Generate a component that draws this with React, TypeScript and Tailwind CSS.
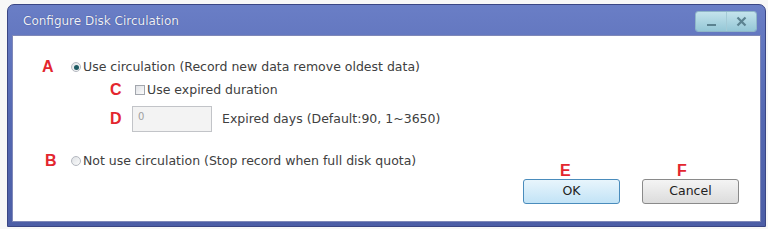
import React from 'react';

const Letter: React.FC<{ children: string; className?: string }> = ({ children, className }) => (
  <span className={`font-['Liberation_Sans',sans-serif] text-[16px] font-bold leading-none text-[#e3262e] ${className ?? ''}`}>
    {children}
  </span>
);

const Radio: React.FC<{ checked?: boolean }> = ({ checked }) => (
  <span className="flex h-[10px] w-[10px] items-center justify-center rounded-full border border-[#b4b8c0] bg-gradient-to-br from-[#dfe2e6] to-[#fafafa]">
    {checked && <span className="h-[5px] w-[5px] rounded-full bg-[#1d5a63]" />}
  </span>
);

export default function App() {
  return (
    <div className="h-[229px] w-[768px] overflow-hidden bg-[#f7f7f7] pl-[7px] pr-[2px] pt-[4px] font-['DejaVu_Sans',sans-serif]">
      <div className="flex h-[223px] flex-col rounded-t-[7px] border border-[#3a4684] bg-gradient-to-b from-[#6a7ec6] via-[#5468b2] to-[#4c5ea6]">
        {/* Title bar */}
        <div className="flex h-[30px] shrink-0 items-center justify-between pl-[15px] pr-[8px] pt-[2px]">
          <span className="text-[12px] text-[#eef0fa] [text-shadow:0_0_1px_#2c3a78]">Configure Disk Circulation</span>
          <div className="flex h-[21px] overflow-hidden rounded-[3px] border border-[#8fb6c8]">
            <div className="flex w-[30px] items-end justify-center bg-gradient-to-b from-[#c4e3ec] to-[#94c7d6] pb-[5px]">
              <span className="h-[2px] w-[9px] bg-[#5b8290]" />
            </div>
            <div className="flex w-[30px] items-center justify-center border-l border-[#a4cad6] bg-gradient-to-b from-[#c4e3ec] to-[#94c7d6]">
              <svg width="11" height="11" viewBox="0 0 11 11">
                <path d="M1.5 1.5 L9.5 9.5 M9.5 1.5 L1.5 9.5" stroke="#5b8290" strokeWidth="2.2" />
              </svg>
            </div>
          </div>
        </div>

        {/* Client area */}
        <div className="mx-[4px] mb-[4px] flex flex-1 flex-col border border-[#7f88b8] bg-white pr-[21px] pt-[21px] text-[12.5px] text-[#404040]">
          <div className="flex h-[20px] items-center">
            <Letter className="ml-[29px] w-[29px]">A</Letter>
            <Radio checked />
            <span className="ml-[2px]">Use circulation (Record new data remove oldest data)</span>
          </div>

          <div className="mt-[3px] flex h-[20px] items-center">
            <Letter className="ml-[97px] w-[25px]">C</Letter>
            <span className="h-[10px] w-[10px] border border-[#a3a7ae] bg-gradient-to-br from-[#e0e2e6] to-[#fbfbfb]" />
            <span className="ml-[2px]">Use expired duration</span>
          </div>

          <div className="mt-[6px] flex items-center">
            <Letter className="ml-[97px] w-[22px]">D</Letter>
            <div className="flex h-[26px] w-[80px] items-start border border-[#c2c4c8] bg-[#f3f3f3] pl-[5px] pt-[2px] text-[10px] text-[#a0a0a0]">0</div>
            <span className="ml-[10px]">Expired days (Default:90, 1~3650)</span>
          </div>

          <div className="flex">
            <div className="mt-[19px] flex h-[20px] items-center">
              <Letter className="ml-[32px] w-[26px]">B</Letter>
              <Radio />
              <span className="ml-[2px]">Not use circulation (Stop record when full disk quota)</span>
            </div>

            <div className="ml-auto mt-[31px] flex gap-[22px]">
              <div className="flex flex-col">
                <Letter className="ml-[37px] h-[16px]">E</Letter>
                <button className="h-[25px] w-[97px] rounded-[3px] border border-[#4a8cbc] bg-gradient-to-b from-[#e8f5fc] to-[#c2e3f6] text-[12.5px] text-[#222]">
                  OK
                </button>
              </div>
              <div className="flex flex-col">
                <Letter className="ml-[35px] h-[16px]">F</Letter>
                <button className="h-[25px] w-[97px] rounded-[3px] border border-[#8a8a8a] bg-gradient-to-b from-[#f4f4f4] to-[#dcdcdc] text-[12.5px] text-[#222]">
                  Cancel
                </button>
              </div>
            </div>
          </div>
        </div>
      </div>
    </div>
  );
}
